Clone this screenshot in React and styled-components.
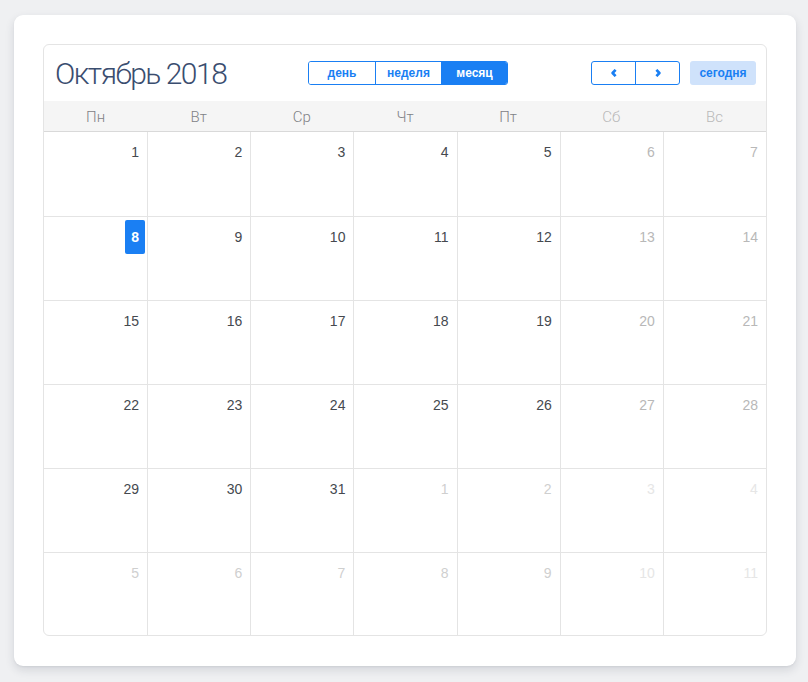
import styled, { createGlobalStyle } from "styled-components";

const GlobalStyle = createGlobalStyle`
  html, body {
    margin: 0;
    padding: 0;
    background: #eff0f2;
  }
  body {
    font-family: "Liberation Sans", "Roboto", sans-serif;
  }
`;

const weekdays = ["Пн", "Вт", "Ср", "Чт", "Пт", "Сб", "Вс"];

function buildWeeks() {
  const days = [];
  for (let d = 1; d <= 31; d++) days.push({ n: d, other: false });
  for (let d = 1; d <= 11; d++) days.push({ n: d, other: true });
  const weeks = [];
  for (let i = 0; i < days.length; i += 7) weeks.push(days.slice(i, i + 7));
  return weeks;
}

function Chevron({ dir }) {
  return (
    <svg width="6" height="8" viewBox="0 0 6 8">
      {dir === "left" ? (
        <path d="M4.6 0.8 L1.6 4 L4.6 7.2" fill="none" stroke="#1a7ff3" strokeWidth="2.6" strokeLinejoin="round" />
      ) : (
        <path d="M1.4 0.8 L4.4 4 L1.4 7.2" fill="none" stroke="#1a7ff3" strokeWidth="2.6" strokeLinejoin="round" />
      )}
    </svg>
  );
}

export default function App() {
  const weeks = buildWeeks();
  return (
    <>
      <GlobalStyle />
      <Page>
        <Card>
          <Calendar>
            <Toolbar>
              <Title>Октябрь 2018</Title>
              <ViewGroup>
                <ViewButton>день</ViewButton>
                <ViewButton>неделя</ViewButton>
                <ViewButton active>месяц</ViewButton>
              </ViewGroup>
              <RightTools>
                <NavGroup>
                  <NavButton>
                    <Chevron dir="left" />
                  </NavButton>
                  <NavButton>
                    <Chevron dir="right" />
                  </NavButton>
                </NavGroup>
                <TodayButton>сегодня</TodayButton>
              </RightTools>
            </Toolbar>
            <HeadRow>
              {weekdays.map((w, i) => (
                <HeadCell key={w} weekend={i >= 5}>
                  {w}
                </HeadCell>
              ))}
            </HeadRow>
            {weeks.map((week, wi) => (
              <WeekRow
                key={wi}
                first={wi === 0}
                last={wi === weeks.length - 1}
              >
                {week.map((day, di) => (
                  <DayCell key={di} first={di === 0}>
                    <DayNumber
                      other={day.other}
                      weekend={di >= 5}
                      today={!day.other && day.n === 8}
                    >
                      {day.n}
                    </DayNumber>
                  </DayCell>
                ))}
              </WeekRow>
            ))}
          </Calendar>
        </Card>
      </Page>
    </>
  );
}

const Page = styled.div`
  padding: 15px 12px 16px 14px;
`;

const Card = styled.div`
  background: #ffffff;
  border-radius: 9px;
  padding: 29px 29px 30px 29px;
  box-shadow: 0 4px 10px rgba(40, 50, 70, 0.14), 0 1px 2px rgba(40, 50, 70, 0.06);
`;

const Calendar = styled.div`
  border: 1px solid #e4e4e4;
  border-radius: 6px;
  overflow: hidden;
`;

const Toolbar = styled.div`
  height: 56px;
  padding: 0 10px 0 11px;
  display: flex;
  align-items: center;
`;

const Title = styled.h2`
  margin: 0;
  flex: 1;
  font-family: "Roboto", "Liberation Sans", sans-serif;
  font-weight: 300;
  font-size: 30px;
  letter-spacing: -1.5px;
  color: #3a4d6f;
  padding-top: 1px;
`;

const ViewGroup = styled.div`
  display: flex;
  border: 1px solid #1a7ff3;
  border-radius: 3px;
  overflow: hidden;
  margin-right: 83px;
`;

const ViewButton = styled.div`
  width: 66px;
  height: 22px;
  box-sizing: border-box;
  display: flex;
  align-items: center;
  justify-content: center;
  font-size: 12px;
  font-weight: 700;
  color: ${(p) => (p.active ? "#ffffff" : "#1a7ff3")};
  background: ${(p) => (p.active ? "#1a7ff3" : "#ffffff")};
  & + & {
    border-left: 1px solid #1a7ff3;
  }
`;

const RightTools = styled.div`
  display: flex;
  align-items: center;
  gap: 10px;
`;

const NavGroup = styled.div`
  display: flex;
  border: 1px solid #1a7ff3;
  border-radius: 3px;
`;

const NavButton = styled.div`
  width: 43px;
  height: 22px;
  display: flex;
  align-items: center;
  justify-content: center;
  & + & {
    border-left: 1px solid #1a7ff3;
  }
`;

const TodayButton = styled.div`
  height: 24px;
  width: 66px;
  border-radius: 3px;
  background: #cfe2fb;
  color: #1a7ff3;
  font-size: 12px;
  font-weight: 700;
  display: flex;
  align-items: center;
  justify-content: center;
`;

const HeadRow = styled.div`
  display: grid;
  grid-template-columns: repeat(7, 1fr);
  background: #f5f5f5;
  border-bottom: 1px solid #d9d9d9;
  height: 30px;
`;

const HeadCell = styled.div`
  display: flex;
  align-items: center;
  justify-content: center;
  font-family: "Roboto", "Liberation Sans", sans-serif;
  font-size: 15px;
  font-weight: 300;
  color: ${(p) => (p.weekend ? "#b9b9b9" : "#7f8185")};
  padding-top: 1px;
`;

const WeekRow = styled.div`
  display: grid;
  grid-template-columns: repeat(7, 1fr);
  height: ${(p) => (p.first ? "84px" : p.last ? "82px" : "83px")};
  border-bottom: ${(p) => (p.last ? "none" : "1px solid #e4e4e4")};
`;

const DayCell = styled.div`
  display: flex;
  justify-content: flex-end;
  align-items: flex-start;
  border-left: ${(p) => (p.first ? "none" : "1px solid #e4e4e4")};
`;

const numberColor = (p) => {
  if (p.today) return "#ffffff";
  if (p.other && p.weekend) return "#e6e6e6";
  if (p.other) return "#cfcfcf";
  if (p.weekend) return "#b8b8b8";
  return "#45494f";
};

const DayNumber = styled.span`
  margin: 3px 2px 0 0;
  padding: 8px 6px;
  min-width: 8px;
  line-height: 18px;
  font-size: 14px;
  font-weight: ${(p) => (p.today ? 700 : 400)};
  text-align: center;
  border-radius: 2px;
  color: ${numberColor};
  background: ${(p) => (p.today ? "#1a7ff3" : "transparent")};
`;
